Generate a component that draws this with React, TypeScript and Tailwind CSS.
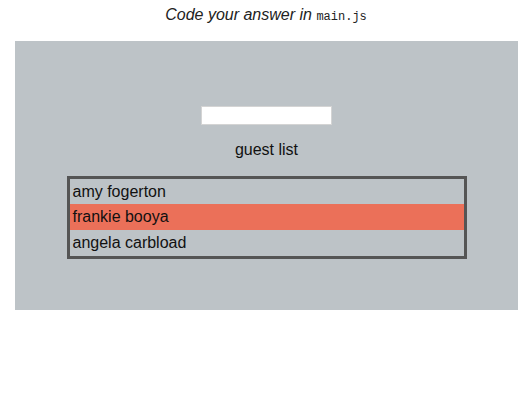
export default function App() {
  const guests = ["amy fogerton", "frankie booya", "angela carbload"];
  return (
    <div className="w-[532px] h-[405px] bg-white" style={{ fontFamily: '"Liberation Sans", Arial, sans-serif' }}>
      <div className="h-[41px] pt-[6px] text-center text-[16px] leading-[18px] italic text-[#222]">
        Code your answer in{" "}
        <span className="not-italic text-[12px]" style={{ fontFamily: '"Liberation Mono", monospace' }}>main.js</span>
      </div>
      <div className="ml-[15px] w-[503px] h-[269px] bg-[#bdc3c7] flex flex-col items-center pt-[65px]">
        <input className="w-[131px] h-[19px] bg-white border border-[#d4d4d4] outline-none" />
        <div className="mt-[16px] h-[18px] leading-[18px] text-[16px] text-[#111]">guest list</div>
        <div className="mt-[17px] w-[400px] border-[3px] border-[#555555] flex flex-col">
          {guests.map((g, i) => (
            <div
              key={g}
              className={
                (i === 1 ? "bg-[#eb7059] h-[26px] " : i === 0 ? "h-[25px] " : "h-[26px] ") +
                "pl-[3px] flex items-center text-[16px] text-[#111]"
              }
            >
              {g}
            </div>
          ))}
        </div>
      </div>
    </div>
  );
}
